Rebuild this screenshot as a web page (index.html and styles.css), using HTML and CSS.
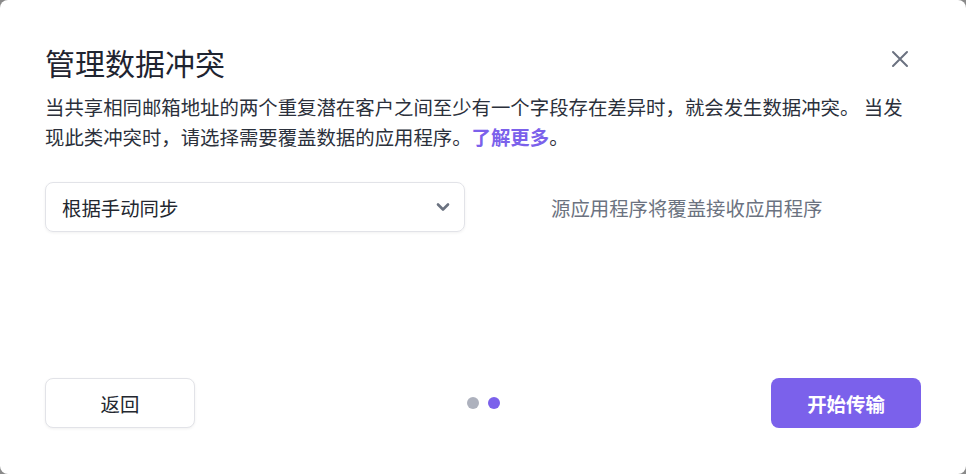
FILE: index.html
```html
<!DOCTYPE html>
<html lang="zh-CN">
<head>
<meta charset="UTF-8" />
<meta name="viewport" content="width=device-width, initial-scale=1" />
<title>管理数据冲突</title>
<link rel="stylesheet" href="styles.css">
</head>
<body>

<div class="modal">
  <div class="modal-head">
    <h1 class="modal-title">管理数据冲突</h1>
    <button class="close-btn" title="关闭">
      <svg width="18" height="18" viewBox="0 0 18 18">
        <path d="M2 2 L16 16 M16 2 L2 16" stroke="#6b7280" stroke-width="2" stroke-linecap="round" />
      </svg>
    </button>
  </div>

  <p class="modal-desc">当共享相同邮箱地址的两个重复潜在客户之间至少有一个字段存在差异时，就会发生数据冲突。 当发现此类冲突时，请选择需要覆盖数据的应用程序。<a href="#" class="learn-more">了解更多</a>。</p>

  <div class="sync-row">
    <div class="select-box">
      <span>根据手动同步</span>
      <svg width="14" height="10" viewBox="0 0 14 10">
        <path d="M2 2.5 L7 7.5 L12 2.5" fill="none" stroke="#6b7280" stroke-width="2.6" stroke-linecap="round" stroke-linejoin="round" />
      </svg>
    </div>
    <div class="sync-note">源应用程序将覆盖接收应用程序</div>
  </div>

  <div class="modal-foot">
    <button class="btn btn-back">返回</button>
    <div class="steps">
      <span class="dot"></span>
      <span class="dot active"></span>
    </div>
    <button class="btn btn-start">开始传输</button>
  </div>
</div>

</body>
</html>
```

FILE: styles.css
```css
/* Reset */
* {
  margin: 0; padding: 0; box-sizing: border-box;
}
body {
  background: #8a8a8a;
  font-family: "Noto Sans CJK SC", "Noto Sans", sans-serif;
  height: 100vh;
  overflow: hidden;
}
.modal {
  background: #fff;
  height: 474px;
  border-radius: 8px;
  padding: 40px 45px 0 45px;
  display: flex;
  flex-direction: column;
}
.modal-head {
  display: flex;
  justify-content: space-between;
  align-items: center;
  height: 44px;
}
.modal-title {
  font-size: 30px;
  font-weight: 400;
  color: #1f2430;
  line-height: 44px;
}
.close-btn {
  background: none;
  border: none;
  cursor: pointer;
  width: 28px;
  height: 28px;
  display: flex;
  align-items: center;
  justify-content: center;
  margin-right: 7px;
  margin-top: -7px;
}
.modal-desc {
  margin-top: 8px;
  font-size: 19.4px;
  line-height: 30px;
  color: #2b303b;
}
.learn-more {
  color: #7b61eb;
  font-weight: 700;
  text-decoration: none;
}
.sync-row {
  display: flex;
  align-items: center;
  margin-top: 30px;
}
.select-box {
  width: 420px;
  height: 50px;
  border: 1px solid #e2e3e8;
  border-radius: 8px;
  box-shadow: 0 1px 3px rgba(0,0,0,0.06);
  display: flex;
  align-items: center;
  justify-content: space-between;
  padding: 0 14px 0 16px;
  font-size: 19.4px;
  color: #23272f;
}
.sync-note {
  flex: 1;
  padding-left: 86px;
  font-size: 19.4px;
  color: #6b7280;
}
.modal-foot {
  margin-top: auto;
  margin-bottom: 46px;
  display: flex;
  align-items: center;
  justify-content: space-between;
}
.btn {
  width: 150px;
  height: 50px;
  border-radius: 8px;
  font-family: inherit;
  font-size: 19.4px;
  cursor: pointer;
}
.btn-back {
  background: #fff;
  border: 1px solid #e2e3e8;
  box-shadow: 0 1px 3px rgba(0,0,0,0.06);
  color: #23272f;
}
.btn-start {
  background: #7b61eb;
  border: none;
  color: #fff;
  font-weight: 700;
}
.steps {
  display: flex;
  gap: 9px;
}
.dot {
  width: 12px;
  height: 12px;
  border-radius: 50%;
  background: #adb1bd;
}
.dot.active {
  background: #7b61eb;
}
```
